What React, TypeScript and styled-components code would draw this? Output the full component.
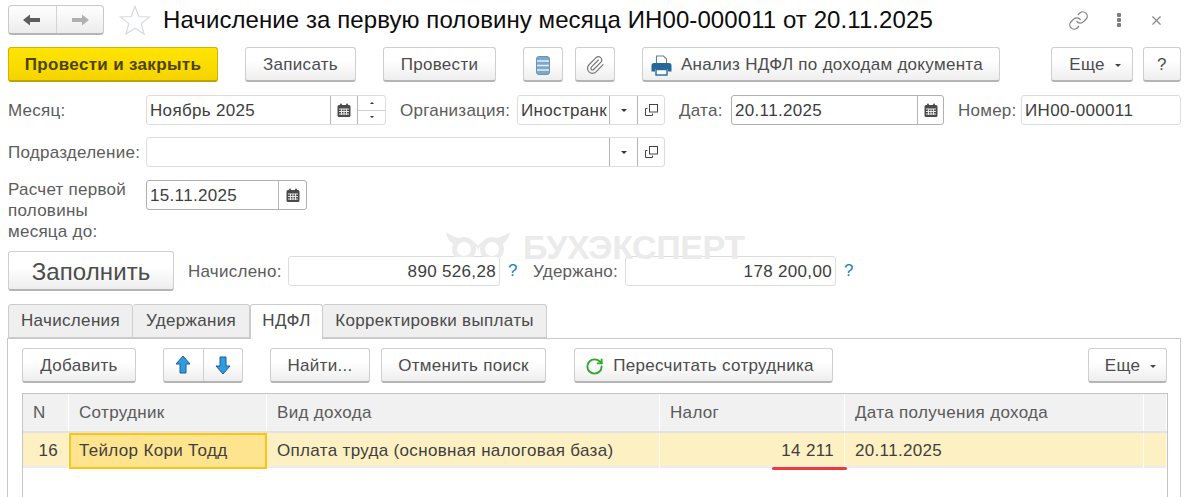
import React from 'react';
import styled, { createGlobalStyle } from 'styled-components';
import { Link, Paperclip, RotateCw, X } from 'lucide-react';

const Global = createGlobalStyle`
  html, body { margin: 0; padding: 0; background: #fff; }
  body { font-family: "Liberation Sans", Arial, sans-serif; overflow: hidden; }
`;

const Page = styled.div`
  position: relative;
  width: 1186px;
  height: 497px;
  overflow: hidden;
  background: #fff;
  color: #4a4a4a;
  font-size: 17px;
`;

const TitleBar = styled.div`
  display: flex;
  align-items: center;
  height: 30px;
  padding: 5px 0 0 8px;
`;

const NavGroup = styled.div`
  display: flex;
  width: 96px;
  height: 30px;
  box-sizing: border-box;
  border: 1px solid #c9c9c9;
  border-bottom: 2px solid #b5b5b5;
  border-radius: 4px;
  background: linear-gradient(#fff, #ececec);
`;

const NavCell = styled.div<{ $divided?: boolean }>`
  flex: 1;
  display: flex;
  align-items: center;
  justify-content: center;
  border-left: ${p => (p.$divided ? '1px solid #d4d4d4' : 'none')};
`;

const StarBox = styled.div`
  margin-left: 15px;
  width: 32px;
  height: 30px;
`;

const Title = styled.h1`
  margin: 0 0 0 12px;
  font-size: 24px;
  font-weight: 400;
  letter-spacing: 0.08px;
  color: #0c0c0c;
  white-space: nowrap;
`;

const WindowTools = styled.div`
  margin-left: auto;
  display: flex;
  align-items: center;
  gap: 28px;
  padding-right: 22px;
  color: #858585;
`;

const Dots = styled.div`
  display: flex;
  flex-direction: column;
  gap: 1px;
  span { width: 4px; height: 4px; background: #7d7d7d; border-radius: 1px; }
`;

const Toolbar = styled.div`
  display: flex;
  align-items: center;
  margin-top: 12px;
  padding-left: 8px;
`;

const Button = styled.button<{ $width: number; $gap?: number; $height?: number; $size?: number; $shift?: number }>`
  display: flex;
  align-items: center;
  justify-content: center;
  flex: none;
  width: ${p => p.$width}px;
  height: ${p => p.$height ?? 35}px;
  margin-left: ${p => p.$gap ?? 0}px;
  padding: 2px ${p => (p.$shift && p.$shift > 0 ? p.$shift : 0)}px 0 ${p => (p.$shift && p.$shift < 0 ? -p.$shift : 0)}px;
  box-sizing: border-box;
  border: 1px solid #cfcfcf;
  border-bottom: 2px solid #b4b4b4;
  border-radius: 3px;
  background: linear-gradient(#fff 40%, #eeeeee);
  color: #4c4c4c;
  font: 400 ${p => p.$size ?? 17}px "Liberation Sans", Arial, sans-serif;
  letter-spacing: ${p => (p.$size ? 0.1 : 0.3)}px;
  white-space: nowrap;
`;

const PrimaryButton = styled(Button)`
  background: linear-gradient(#ffe500, #f5d400);
  border: 1px solid #d4b300;
  border-bottom: 2px solid #bfa200;
  font-weight: 700;
  letter-spacing: 0.33px;
  color: #4d4300;
`;

const ButtonIcon = styled.span`
  display: flex;
  margin-right: 9px;
`;

const Caret = styled.i`
  width: 0;
  height: 0;
  margin-left: 10px;
  border-left: 3px solid transparent;
  border-right: 3px solid transparent;
  border-top: 3px solid #444;
`;

const Row = styled.div<{ $top: number; $height?: number }>`
  display: flex;
  align-items: ${p => (p.$height ? 'flex-start' : 'center')};
  margin-top: ${p => p.$top}px;
  padding-left: 8px;
  ${p => (p.$height ? `height: ${p.$height}px;` : '')}
`;

const Label = styled.label<{ $width: number; $gap?: number }>`
  flex: none;
  width: ${p => p.$width}px;
  margin-left: ${p => p.$gap ?? 0}px;
  color: #5c5c5c;
  font-size: 17px;
  letter-spacing: 0.25px;
  line-height: 21px;
  white-space: nowrap;
`;

const StackedLabel = styled(Label)`
  margin-top: -1px;
`;

const Field = styled.div<{ $width: number; $active?: boolean }>`
  display: flex;
  flex: none;
  width: ${p => p.$width}px;
  height: 30px;
  box-sizing: border-box;
  border: 1px solid ${p => (p.$active ? '#b0b0b0' : '#dddddd')};
  border-radius: 3px;
  background: #fff;
`;

const FieldText = styled.div<{ $right?: boolean }>`
  flex: 1;
  min-width: 0;
  padding: 0 3px;
  overflow: hidden;
  color: #3d3d3d;
  font-size: 17px;
  line-height: 29px;
  letter-spacing: 0.33px;
  text-align: ${p => (p.$right ? 'right' : 'left')};
  white-space: nowrap;
`;

const FieldAddon = styled.div<{ $width: number }>`
  display: flex;
  flex-direction: column;
  align-items: center;
  justify-content: center;
  flex: none;
  box-sizing: border-box;
  width: ${p => p.$width}px;
  border-left: 1px solid #b5b5b5;
`;

const SpinPart = styled.div`
  flex: 1;
  width: 100%;
  display: flex;
  align-items: center;
  justify-content: center;
  & + & { border-top: 1px solid #cfcfcf; }
`;

const Triangle = styled.i<{ $up?: boolean; $size?: number }>`
  width: 0;
  height: 0;
  border-left: ${p => p.$size ?? 2}px solid transparent;
  border-right: ${p => p.$size ?? 2}px solid transparent;
  ${p => (p.$up ? 'border-bottom' : 'border-top')}: ${p => p.$size ?? 2}px solid #333;
`;

const Hint = styled.span`
  flex: none;
  width: 25px;
  margin-left: 8px;
  color: #1c80c4;
  font-size: 17px;
`;

const Tabs = styled.div`
  display: flex;
  margin: 13px 0 0 8px;
  height: 34px;
`;

const Tab = styled.div<{ $width: number; $active?: boolean }>`
  flex: none;
  width: ${p => p.$width}px;
  height: ${p => (p.$active ? 35 : 34)}px;
  box-sizing: border-box;
  border: 1px solid #cccccc;
  border-bottom: ${p => (p.$active ? 'none' : '1px solid #cccccc')};
  border-left: ${p => (p.$active ? '1px solid #ccc' : 'none')};
  border-radius: 3px 3px 0 0;
  background: ${p => (p.$active ? '#fff' : '#efefef')};
  color: #4a4a4a;
  font-size: 17px;
  letter-spacing: 0.33px;
  line-height: 32px;
  text-align: center;
  position: relative;
  z-index: ${p => (p.$active ? 1 : 0)};
  &:first-child { border-left: 1px solid #ccc; }
`;

const Panel = styled.div`
  margin-left: 7px;
  width: 1174px;
  height: 159px;
  box-sizing: border-box;
  border: 1px solid #c8c8c8;
  border-bottom: none;
  padding: 9px 13px 0 14px;
`;

const PanelBar = styled.div`
  display: flex;
  align-items: center;
`;

const ArrowGroup = styled.div`
  display: flex;
  flex: none;
  width: 80px;
  height: 35px;
  margin-left: 27px;
  box-sizing: border-box;
  border: 1px solid #cfcfcf;
  border-bottom: 2px solid #b4b4b4;
  border-radius: 3px;
  background: linear-gradient(#fff 40%, #eee);
`;

const ArrowCell = styled.div<{ $divided?: boolean }>`
  flex: 1;
  display: flex;
  align-items: center;
  justify-content: center;
  border-left: ${p => (p.$divided ? '1px solid #cfcfcf' : 'none')};
`;

const Table = styled.div`
  margin-top: 10px;
  width: 1146px;
  height: 110px;
  box-sizing: border-box;
  border: 1px solid #c4c4c4;
  border-bottom: none;
`;

const Cols = '46px 198px 393px 185px 299px 1fr';

const HeadRow = styled.div`
  display: grid;
  grid-template-columns: ${Cols};
  height: 37px;
  border-bottom: 2px solid #e2e2e2;
`;

const HeadCell = styled.div`
  padding-left: 10px;
  background: #f1f1f1;
  border-right: 1px solid #fff;
  color: #5a5a5a;
  font-size: 17px;
  letter-spacing: 0.33px;
  line-height: 37px;
  white-space: nowrap;
`;

const DataRow = styled.div`
  position: relative;
  display: grid;
  grid-template-columns: ${Cols};
  height: 33px;
  background: #fdf1c4;
  border-bottom: 2px solid #e9ecf0;
`;

const DataCell = styled.div<{ $right?: boolean; $current?: boolean }>`
  padding: 0 ${p => (p.$right ? 10 : 0)}px 0 ${p => (p.$current ? 8 : 10)}px;
  box-sizing: border-box;
  border-right: 1px solid ${p => (p.$current ? 'transparent' : '#fffaf0')};
  color: #3f3f3f;
  font-size: 17px;
  letter-spacing: 0.33px;
  line-height: ${p => (p.$current ? 32 : 36)}px;
  text-align: ${p => (p.$right ? 'right' : 'left')};
  white-space: nowrap;
  ${p => (p.$current ? 'background: #ffe48f; border: 2px solid #fbc515;' : '')}
`;

const RedMark = styled.div`
  position: absolute;
  left: 749px;
  top: 34px;
  width: 75px;
  height: 3px;
  border-radius: 2px;
  background: #f03a3a;
`;

const Watermark = styled.div`
  position: absolute;
  left: 445px;
  top: 232px;
  display: flex;
  align-items: flex-start;
  gap: 12px;
  color: #ebebeb;
  font-size: 34px;
  font-weight: 700;
  letter-spacing: -0.4px;
  line-height: 30px;
  pointer-events: none;
`;

const Calendar = () => (
  <svg width="14" height="14" viewBox="0 0 14 14">
    <path d="M2 2h10a1.5 1.5 0 0 1 1.5 1.5v9A1.5 1.5 0 0 1 12 14H2a1.5 1.5 0 0 1-1.5-1.5v-9A1.5 1.5 0 0 1 2 2z" fill="#4a4a4a" />
    <rect x="3" y="0.5" width="2" height="3" rx="1" fill="#4a4a4a" />
    <rect x="9" y="0.5" width="2" height="3" rx="1" fill="#4a4a4a" />
    <path d="M2 6h10M2 8.5h10M2 11h10M4.5 6v6M7 6v6M9.5 6v6" stroke="#e8e8e8" strokeWidth="1" fill="none" />
  </svg>
);

const OpenIcon = () => (
  <svg width="14" height="14" viewBox="0 0 14 14" fill="none" stroke="#444" strokeWidth="1">
    <rect x="5.5" y="1.5" width="8" height="7.5" fill="#fff" />
    <path d="M3.5 5.5H1.5V12.5H8.5V10.5" />
  </svg>
);

const Arrow = ({ flip, color }: { flip?: boolean; color: string }) => (
  <svg width="20" height="16" viewBox="0 0 20 16" style={flip ? { transform: 'scaleX(-1)' } : undefined}>
    <path d="M1 8L8 2.5V6H18V10H8V13.5Z" fill={color} />
  </svg>
);

const BlueArrow = ({ down }: { down?: boolean }) => (
  <svg width="16" height="20" viewBox="0 0 16 20" style={down ? { transform: 'scaleY(-1)' } : undefined}>
    <path d="M8 1L15 9H11V18H5V9H1Z" fill="#2f9be0" stroke="#1b5f93" strokeWidth="1" strokeLinejoin="round" />
  </svg>
);

const Star = () => (
  <svg width="32" height="30" viewBox="0 0 32 30">
    <path d="M16 1.5L19.8 11.5L30.5 12L22.2 18.6L25 29L16 23.2L7 29L9.8 18.6L1.5 12L12.2 11.5Z" fill="#fff" stroke="#d6dade" strokeWidth="1.2" />
  </svg>
);

const ListIcon = () => (
  <svg width="14" height="19" viewBox="0 0 14 19">
    <rect x="0.5" y="0.5" width="13" height="18" rx="2.5" fill="#7da9ca" stroke="#6a93b3" />
    <path d="M1 5h12M1 9.500h12M1 14h12" stroke="#e4eef5" strokeWidth="1.4" />
  </svg>
);

const PrinterIcon = () => (
  <svg width="21" height="21" viewBox="0 0 21 21">
    <path d="M5.5 1h7l3 3v5h-10z" fill="#fff" stroke="#6d7f8c" strokeWidth="1.1" />
    <path d="M3 8h15a2.500 2.500 0 0 1 2.500 2.500V16.500H17V14H4v2.500H.5v-6A2.500 2.500 0 0 1 3 8z" fill="#27689b" />
    <rect x="5" y="14.500" width="11" height="5.500" fill="#fff" stroke="#27689b" strokeWidth="1.4" />
  </svg>
);

const Owl = () => (
  <svg width="66" height="25" viewBox="0 0 66 25" fill="none">
    <path d="M1 0C8 5 16 7 24 8C28 9 31 11 33 14C35 11 38 9 42 8C50 7 58 5 65 0C64 7 60 11 56 13C51 8 44 8 39 11C36 13 34 15 33 18C32 15 30 13 27 11C22 8 15 8 10 13C6 11 2 7 1 0Z" fill="#ebebeb" />
    <circle cx="19" cy="17" r="9.500" stroke="#ebebeb" strokeWidth="5" />
    <circle cx="47" cy="17" r="9.500" stroke="#ebebeb" strokeWidth="5" />
  </svg>
);

export default function App() {
  return (
    <Page>
      <Global />
      <TitleBar>
        <NavGroup>
          <NavCell><Arrow color="#5d5d5d" /></NavCell>
          <NavCell $divided><Arrow flip color="#b0b0b0" /></NavCell>
        </NavGroup>
        <StarBox><Star /></StarBox>
        <Title>Начисление за первую половину месяца ИН00-000011 от 20.11.2025</Title>
        <WindowTools>
          <Link size={21} strokeWidth={1.5} />
          <Dots><span /><span /><span /></Dots>
          <X size={15} strokeWidth={1.7} />
        </WindowTools>
      </TitleBar>

      <Toolbar>
        <PrimaryButton $width={210}>Провести и закрыть</PrimaryButton>
        <Button $width={111} $gap={27}>Записать</Button>
        <Button $width={113} $gap={27}>Провести</Button>
        <Button $width={40} $gap={27}><ListIcon /></Button>
        <Button $width={40} $gap={12}><Paperclip size={20} strokeWidth={1.4} color="#777" /></Button>
        <Button $width={358} $gap={27} $shift={8}>
          <ButtonIcon><PrinterIcon /></ButtonIcon>Анализ НДФЛ по доходам документа
        </Button>
        <Button $width={82} $gap={51} $shift={-6}>Еще<Caret /></Button>
        <Button $width={38} $gap={10}>?</Button>
      </Toolbar>

      <Row $top={13}>
        <Label $width={138}>Месяц:</Label>
        <Field $width={240}>
          <FieldText>Ноябрь 2025</FieldText>
          <FieldAddon $width={27}><Calendar /></FieldAddon>
          <FieldAddon $width={28}>
            <SpinPart><Triangle $up /></SpinPart>
            <SpinPart><Triangle /></SpinPart>
          </FieldAddon>
        </Field>
        <Label $width={117} $gap={14}>Организация:</Label>
        <Field $width={148}>
          <FieldText>Иностранк</FieldText>
          <FieldAddon $width={28}><Triangle $size={3} /></FieldAddon>
          <FieldAddon $width={27}><OpenIcon /></FieldAddon>
        </Field>
        <Label $width={52} $gap={14}>Дата:</Label>
        <Field $width={213} $active>
          <FieldText>20.11.2025</FieldText>
          <FieldAddon $width={26}><Calendar /></FieldAddon>
        </Field>
        <Label $width={63} $gap={14}>Номер:</Label>
        <Field $width={160}>
          <FieldText>ИН00-000011</FieldText>
        </Field>
      </Row>

      <Row $top={12}>
        <Label $width={138}>Подразделение:</Label>
        <Field $width={519}>
          <FieldText />
          <FieldAddon $width={28}><Triangle $size={3} /></FieldAddon>
          <FieldAddon $width={27}><OpenIcon /></FieldAddon>
        </Field>
      </Row>

      <Row $top={13} $height={60}>
        <StackedLabel $width={138}>Расчет первой<br />половины<br />месяца до:</StackedLabel>
        <Field $width={161} $active>
          <FieldText>15.11.2025</FieldText>
          <FieldAddon $width={28}><Calendar /></FieldAddon>
        </Field>
      </Row>

      <Row $top={11}>
        <Button $width={166} $height={40} $size={24}>Заполнить</Button>
        <Label $width={100} $gap={14}>Начислено:</Label>
        <Field $width={212}>
          <FieldText $right>890 526,28</FieldText>
        </Field>
        <Hint>?</Hint>
        <Label $width={92}>Удержано:</Label>
        <Field $width={211}>
          <FieldText $right>178 200,00</FieldText>
        </Field>
        <Hint>?</Hint>
      </Row>

      <Tabs>
        <Tab $width={125}>Начисления</Tab>
        <Tab $width={117}>Удержания</Tab>
        <Tab $width={73} $active>НДФЛ</Tab>
        <Tab $width={224}>Корректировки выплаты</Tab>
      </Tabs>

      <Panel>
        <PanelBar>
          <Button $width={114}>Добавить</Button>
          <ArrowGroup>
            <ArrowCell><BlueArrow /></ArrowCell>
            <ArrowCell $divided><BlueArrow down /></ArrowCell>
          </ArrowGroup>
          <Button $width={100} $gap={27}>Найти...</Button>
          <Button $width={165} $gap={11}>Отменить поиск</Button>
          <Button $width={259} $gap={28} $shift={8}>
            <ButtonIcon><RotateCw size={19} strokeWidth={2.4} color="#2ea82e" /></ButtonIcon>Пересчитать сотрудника
          </Button>
          <Button $width={79} $gap={255} $shift={-6}>Еще<Caret /></Button>
        </PanelBar>
        <Table>
          <HeadRow>
            <HeadCell>N</HeadCell>
            <HeadCell>Сотрудник</HeadCell>
            <HeadCell>Вид дохода</HeadCell>
            <HeadCell>Налог</HeadCell>
            <HeadCell>Дата получения дохода</HeadCell>
            <HeadCell />
          </HeadRow>
          <DataRow>
            <DataCell $right>16</DataCell>
            <DataCell $current>Тейлор Кори Тодд</DataCell>
            <DataCell>Оплата труда (основная налоговая база)</DataCell>
            <DataCell $right>14 211</DataCell>
            <DataCell>20.11.2025</DataCell>
            <DataCell />
            <RedMark />
          </DataRow>
        </Table>
      </Panel>

      <Watermark>
        <Owl />
        БУХЭКСПЕРТ
      </Watermark>
    </Page>
  );
}
